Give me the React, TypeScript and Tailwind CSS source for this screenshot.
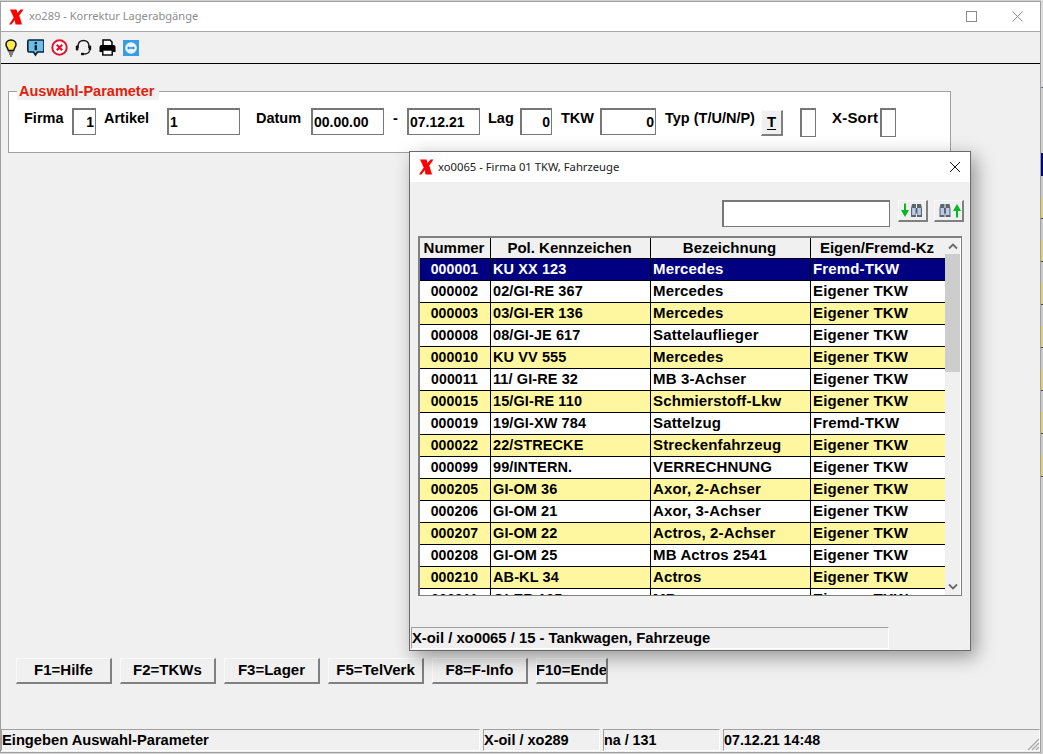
import React from "react";

const XLogo = () => (
  <svg width="15" height="16" viewBox="0 0 15 16" className="shrink-0">
    <path d="M1 0.5 L7.5 0.5 L8.5 4 L11.5 0.5 L14.5 0.5 L10.3 6.5 L13 15.5 L6.5 15.5 L5.8 11 L2.5 15.5 L0 15.5 L4.7 8.5 Z" fill="#ff0000" />
  </svg>
);

const Bulb = () => (
  <svg width="16" height="18" viewBox="0 0 16 18" className="-ml-[1px] mr-[1px]">
    <path d="M8 1 C4.5 1 3 3.5 3 5.5 C3 8 5 9 5.3 11.5 L10.7 11.5 C11 9 13 8 13 5.5 C13 3.5 11.5 1 8 1 Z" fill="#ffe94a" stroke="#111" strokeWidth="1.5" />
    <path d="M5.5 13 H10.5 M6 15 H10 M7 17 H9" stroke="#111" strokeWidth="1.2" />
  </svg>
);

const Info = () => (
  <svg width="17" height="18" viewBox="0 0 17 18">
    <path d="M2 1 H15.5 Q17 1 17 2.5 V11.5 Q17 13 15.5 13 H10.5 L8.5 16 L6.5 13 H2 Q0.8 13 0.8 11.5 V2.5 Q0.8 1 2 1 Z" fill="#6fbde6" stroke="#0b2233" strokeWidth="1.6" />
    <rect x="7.6" y="3" width="2.4" height="2.2" fill="#0b2233" />
    <rect x="7.6" y="6.2" width="2.4" height="5" fill="#0b2233" />
  </svg>
);

const Stop = () => (
  <svg width="17" height="17" viewBox="0 0 17 17">
    <circle cx="8.5" cy="8.5" r="7.2" fill="#fff" stroke="#e8112d" strokeWidth="2" />
    <path d="M5.8 5.8 L11.2 11.2 M11.2 5.8 L5.8 11.2" stroke="#e8112d" strokeWidth="2.2" />
  </svg>
);

const Headset = () => (
  <svg width="17" height="17" viewBox="0 0 17 17">
    <path d="M3 9 V7 C3 -0.5 14 -0.5 14 7 V9" fill="none" stroke="#111" strokeWidth="1.5" />
    <rect x="0.8" y="6.5" width="2.6" height="5" rx="1" fill="#111" />
    <rect x="13.6" y="6.5" width="2.6" height="5" rx="1" fill="#111" />
    <path d="M14.5 11.5 C14.5 14 12 15 8 15" fill="none" stroke="#111" strokeWidth="1.3" />
    <rect x="6" y="13.8" width="3" height="2.4" fill="#111" />
  </svg>
);

const Printer = () => (
  <svg width="17" height="17" viewBox="0 0 17 17">
    <path d="M4 1 H11 L13 3 V7 H4 Z" fill="#fff" stroke="#000" strokeWidth="1.5" />
    <path d="M2.5 6 H14.5 Q16.5 6 16.5 8 V13 H13.5 V11 H3.5 V13 H0.5 V8 Q0.5 6 2.5 6 Z" fill="#000" />
    <rect x="3.8" y="11" width="9.4" height="5" fill="#fff" stroke="#000" strokeWidth="1.4" />
  </svg>
);

const Team = () => (
  <svg width="16" height="16" viewBox="0 0 16 16">
    <rect width="16" height="16" fill="#3a9ce2" />
    <circle cx="8" cy="8" r="5.8" fill="#e9f4fc" />
    <path d="M4 8 L6 6.2 V7.3 H10 V6.2 L12 8 L10 9.8 V8.7 H6 V9.8 Z" fill="#2c87d3" />
  </svg>
);

const Binoculars = () => (
  <g>
    <path d="M0.5 5 L1.5 0.5 H5.5 V4.5 H6.5 V0.5 H10.5 L11.5 5 V13.5 H6.5 V10 H5.5 V13.5 H0.5 Z" fill="#5d6670" />
    <rect x="1.6" y="4.5" width="3.4" height="7" fill="#b9cee6" />
    <rect x="7" y="4.5" width="3.4" height="7" fill="#b9cee6" />
  </g>
);

const FindDown = () => (
  <svg width="24" height="15" viewBox="0 0 24 15">
    <path d="M3 0.5 H5 V7 H8 L4 14 L0 7 H3 Z" fill="#00bb20" />
    <g transform="translate(9.5 0.5)"><Binoculars /></g>
  </svg>
);

const FindUp = () => (
  <svg width="24" height="15" viewBox="0 0 24 15">
    <g transform="translate(2 0.5)"><Binoculars /></g>
    <path d="M19 14.5 H21 V8 H24 L20 1 L16 8 H19 Z" fill="#00bb20" />
  </svg>
);

const inputCls =
  "h-[27px] shrink-0 flex items-center bg-white border-t-2 border-l-2 border-r border-b border-[#777777] text-[14px] font-bold leading-none text-black";

const raisedCls =
  "flex items-center justify-center bg-[#f0f0f0] border-t border-l border-t-[#fafafa] border-l-[#fafafa] border-r-2 border-b-2 border-r-[#808080] border-b-[#808080]";

const Label = ({ w, ml, children }: { w: number; ml?: string; children: React.ReactNode }) => (
  <div style={{ width: w }} className={`shrink-0 whitespace-nowrap text-[14.5px] font-bold leading-[20px] text-black ${ml ?? ""}`}>
    {children}
  </div>
);

const rows: [string, string, string, string][] = [
  ["000001", "KU XX 123", "Mercedes", "Fremd-TKW"],
  ["000002", "02/GI-RE 367", "Mercedes", "Eigener TKW"],
  ["000003", "03/GI-ER 136", "Mercedes", "Eigener TKW"],
  ["000008", "08/GI-JE 617", "Sattelauflieger", "Eigener TKW"],
  ["000010", "KU VV 555", "Mercedes", "Eigener TKW"],
  ["000011", "11/ GI-RE 32", "MB 3-Achser", "Eigener TKW"],
  ["000015", "15/GI-RE 110", "Schmierstoff-Lkw", "Eigener TKW"],
  ["000019", "19/GI-XW 784", "Sattelzug", "Fremd-TKW"],
  ["000022", "22/STRECKE", "Streckenfahrzeug", "Eigener TKW"],
  ["000099", "99/INTERN.", "VERRECHNUNG", "Eigener TKW"],
  ["000205", "GI-OM 36", "Axor, 2-Achser", "Eigener TKW"],
  ["000206", "GI-OM 21", "Axor, 3-Achser", "Eigener TKW"],
  ["000207", "GI-OM 22", "Actros, 2-Achser", "Eigener TKW"],
  ["000208", "GI-OM 25", "MB Actros 2541", "Eigener TKW"],
  ["000210", "AB-KL 34", "Actros", "Eigener TKW"],
  ["000211", "GI-ER 105", "MB", "Eigener TKW"],
];

const fkeys: [string, string][] = [
  ["F1=Hilfe", "w-[96px]"],
  ["F2=TKWs", "w-[96px]"],
  ["F3=Lager", "w-[96px]"],
  ["F5=TelVerk", "w-[96px]"],
  ["F8=F-Info", "w-[96px]"],
  ["F10=Ende", "w-[72px]"],
];

const Chevron = ({ up }: { up?: boolean }) => (
  <svg width="10" height="7" viewBox="0 0 10 7">
    <path d={up ? "M1 5.5 L5 1.5 L9 5.5" : "M1 1.5 L5 5.5 L9 1.5"} fill="none" stroke="#6a6a6a" strokeWidth="1.8" />
  </svg>
);

const Dialog = () => (
  <div className="absolute left-[409px] top-[151px] w-[562px] h-[500px] flex flex-col border border-[#6b6b6b] bg-[#f0f0f0] shadow-[5px_6px_18px_rgba(0,0,0,0.38)]">
    <div className="h-[30px] shrink-0 bg-white flex items-center pl-[9px]">
      <XLogo />
      <span className="ml-[4px] text-[11.25px] text-[#222] font-['Noto_Sans',sans-serif] whitespace-nowrap">xo0065 - Firma 01 TKW, Fahrzeuge</span>
      <svg width="12" height="12" viewBox="0 0 12 12" className="ml-auto mr-[9px]">
        <path d="M1 1 L11 11 M11 1 L1 11" stroke="#111" strokeWidth="1" />
      </svg>
    </div>
    <div className="mt-[18px] flex items-start justify-end pr-[6px]">
      <div className="w-[168px] h-[27px] bg-white border-t-2 border-l-2 border-r border-b border-[#777777]" />
      <div className={`${raisedCls} ml-[8px] w-[30px] h-[22px]`}><FindDown /></div>
      <div className={`${raisedCls} ml-[6px] w-[30px] h-[22px]`}><FindUp /></div>
    </div>
    <div className="ml-[8px] mt-[9px] w-[544px] h-[360px] shrink-0 flex overflow-hidden bg-white border-t-2 border-l-2 border-r border-b border-[#808080]">
      <div className="w-[525px] shrink-0">
        <div className="h-[21px] bg-[#f0f0f0] grid grid-cols-[71px_160px_160px_134px] border-b border-black text-[15px] font-bold leading-[19px] text-black text-center whitespace-nowrap">
          <div className="border-r border-black pr-[2px]">Nummer</div>
          <div className="border-r border-black pr-[2px]">Pol. Kennzeichen</div>
          <div className="border-r border-black pr-[2px]">Bezeichnung</div>
          <div className="pr-[2px]">Eigen/Fremd-Kz</div>
        </div>
        {rows.map((r, i) => (
          <div
            key={r[0]}
            className={`h-[22px] grid grid-cols-[71px_160px_160px_134px] border-b border-black font-bold leading-[21px] whitespace-nowrap ${
              i === 0 ? "bg-[#000080] text-white" : i % 2 === 0 ? "bg-[#fff79f] text-black" : "bg-white text-black"
            }`}
          >
            <div className="border-r border-black text-center pr-[1px] text-[14px] tracking-[0.15px]">{r[0]}</div>
            <div className="border-r border-black pl-[2px] text-[14.5px] tracking-[0.1px]">{r[1]}</div>
            <div className="border-r border-black pl-[2px] text-[15px] leading-[19px] tracking-[0.15px]">{r[2]}</div>
            <div className="pl-[2px] text-[15px] leading-[19px] tracking-[0.15px]">{r[3]}</div>
          </div>
        ))}
      </div>
      <div className="w-[15px] shrink-0 bg-[#f0f0f0] flex flex-col items-center">
        <div className="h-[16px] flex items-center justify-center shrink-0"><Chevron up /></div>
        <div className="w-full h-[118px] shrink-0 bg-[#cdcdcd]" />
        <div className="mt-auto h-[17px] flex items-center justify-center shrink-0"><Chevron /></div>
      </div>
    </div>
    <div className="mt-[31px] ml-[1px] w-[478px] h-[22px] shrink-0 bg-[#f0f0f0] border-t border-l border-t-[#a0a0a0] border-l-[#a0a0a0] border-r border-b border-r-white border-b-white text-[14.8px] font-bold leading-[20px] text-black whitespace-nowrap">
      X-oil / xo0065 / 15 - Tankwagen, Fahrzeuge
    </div>
  </div>
);

const statusCell = "h-[22px] shrink-0 border-t border-l border-t-[#a0a0a0] border-l-[#a0a0a0] border-r border-b border-r-white border-b-white font-bold leading-[20px] text-black whitespace-nowrap";

const stripRows = Array.from({ length: 7 }, (_, i) => i);

export default function App() {
  return (
    <div className="relative w-[1043px] h-[754px] flex overflow-hidden bg-[#d0d0d0] font-['Liberation_Sans',Arial,sans-serif]">
      <div className="w-[1041px] h-[752px] shrink-0 mt-[1px] flex flex-col border border-[#a0a0a0] bg-[#f0f0f0]">
        <div className="h-[30px] shrink-0 bg-white border-b border-[#a8a8a8] flex items-center pl-[8px]">
          <XLogo />
          <span className="ml-[5px] text-[11.1px] text-[#8d8d8d] font-['Noto_Sans',sans-serif] whitespace-nowrap">xo289 - Korrektur Lagerabgänge</span>
          <svg width="11" height="11" viewBox="0 0 11 11" className="ml-auto">
            <rect x="0.5" y="0.5" width="10" height="10" fill="none" stroke="#8a8a8a" />
          </svg>
          <svg width="11" height="11" viewBox="0 0 11 11" className="ml-[35px] mr-[17px]">
            <path d="M0.5 0.5 L10.5 10.5 M10.5 0.5 L0.5 10.5" stroke="#8a8a8a" />
          </svg>
        </div>
        <div className="h-[32px] shrink-0 border-b border-black flex items-center pl-[3px] gap-[7px]">
          <Bulb />
          <Info />
          <Stop />
          <Headset />
          <Printer />
          <Team />
        </div>
        <fieldset className="mt-[19px] ml-[7px] w-[943px] h-[70px] shrink-0 border border-[#a0a0a0] bg-white">
          <legend className="ml-[8px] pl-[2px] pr-[5px] bg-[#f0f0f0] text-[14.5px] font-bold leading-[17px] text-[#e0200a] whitespace-nowrap">Auswahl-Parameter</legend>
          <div className="mt-[8px] flex items-start pl-[15px]">
            <Label w={48}>Firma</Label>
            <div className={`${inputCls} w-[24px] justify-end pr-[1px]`}>1</div>
            <Label w={63} ml="ml-[8px]">Artikel</Label>
            <div className={`${inputCls} w-[73px] pl-[1px]`}>1</div>
            <Label w={55} ml="ml-[16px]">Datum</Label>
            <div className={`${inputCls} w-[73px] pl-[1px]`}>00.00.00</div>
            <Label w={14} ml="ml-[9px]">-</Label>
            <div className={`${inputCls} w-[73px] pl-[1px]`}>07.12.21</div>
            <Label w={32} ml="ml-[8px]">Lag</Label>
            <div className={`${inputCls} w-[32px] justify-end pr-[1px]`}>0</div>
            <Label w={39} ml="ml-[9px]">TKW</Label>
            <div className={`${inputCls} w-[56px] justify-end pr-[1px]`}>0</div>
            <Label w={96} ml="ml-[9px]">Typ (T/U/N/P)</Label>
            <div className={`${raisedCls} mt-[2px] w-[22px] h-[26px] text-[15px] font-bold text-black`}><span className="underline underline-offset-2">T</span></div>
            <div className={`${inputCls} ml-[17px] w-[16px] !h-[29px]`} />
            <Label w={48} ml="ml-[16px]"><span className="text-[15px] tracking-[0.2px]">X-Sort</span></Label>
            <div className={`${inputCls} w-[16px] !h-[29px]`} />
          </div>
        </fieldset>
        <div className="mt-[505px] ml-[15px] flex gap-[8px]">
          {fkeys.map(([t, w]) => (
            <div key={t} className={`${raisedCls} ${w} h-[26px] text-[15px] font-bold text-black whitespace-nowrap overflow-hidden`}>{t}</div>
          ))}
        </div>
        <div className="relative mt-auto mb-[1px] flex gap-[3px]">
          <div className={`${statusCell} w-[479px] text-[14.7px]`}>Eingeben Auswahl-Parameter</div>
          <div className={`${statusCell} w-[117px] text-[14.5px]`}>X-oil / xo289</div>
          <div className={`${statusCell} w-[117px] text-[14.3px]`}>na / 131</div>
          <div className={`${statusCell} flex-1 text-[14.3px]`}>07.12.21 14:48</div>
          <svg width="14" height="14" viewBox="0 0 14 14" className="absolute right-0 bottom-0">
            <path d="M13 2 L2 13 M13 6 L6 13 M13 10 L10 13" stroke="#a8a8a8" strokeWidth="1.2" />
          </svg>
        </div>
      </div>
      <div className="w-[2px] shrink-0 flex flex-col">
        <div className="h-[87px] bg-[#dcdcdc] shrink-0" />
        <div className="h-[1px] bg-[#6a6a8a] shrink-0" />
        <div className="h-[65px] bg-[#cfcfcf] shrink-0" />
        <div className="h-[23px] bg-[#000080] shrink-0" />
        {stripRows.map((i) => (
          <div key={i} className="shrink-0">
            <div className="h-[21px] bg-[#c9c9c9]" />
            <div className="h-[22px] bg-[#d8d07c] border-b border-[#444]" />
          </div>
        ))}
      </div>
      <Dialog />
    </div>
  );
}
